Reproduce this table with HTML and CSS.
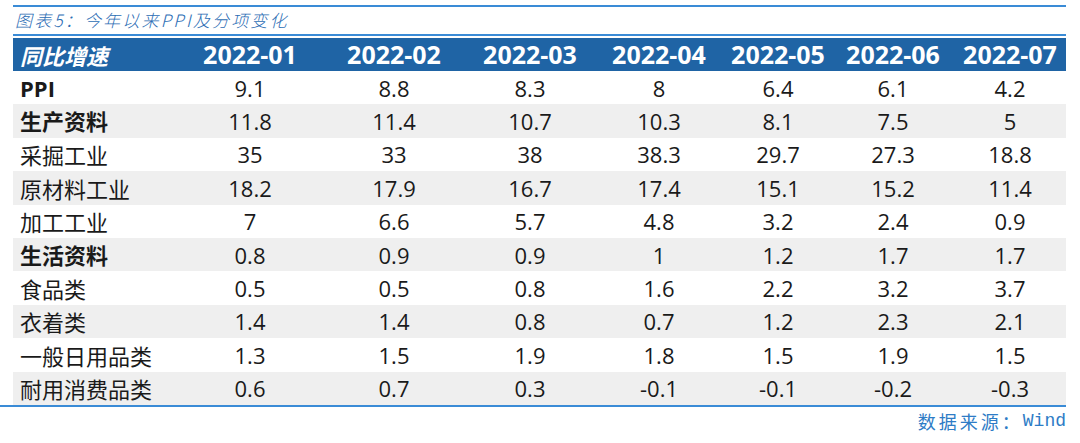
FILE: index.html
```html
<!DOCTYPE html>
<html lang="zh-CN">
<head>
<meta charset="utf-8">
<title>图表5：今年以来PPI及分项变化</title>
<link rel="stylesheet" href="styles.css">
</head>
<body>
<div class="figure">
  <div class="rule-top"></div>
  <div class="title">图表5：今年以来PPI及分项变化</div>
  <div class="rule-title"></div>
  <div class="table">
    <div class="head label">同比增速</div>
    <div class="head">2022-01</div>
    <div class="head">2022-02</div>
    <div class="head">2022-03</div>
    <div class="head">2022-04</div>
    <div class="head">2022-05</div>
    <div class="head">2022-06</div>
    <div class="head">2022-07</div>

    <div class="cell label bold">PPI</div>
    <div class="cell">9.1</div><div class="cell">8.8</div><div class="cell">8.3</div><div class="cell">8</div><div class="cell">6.4</div><div class="cell">6.1</div><div class="cell">4.2</div>

    <div class="cell alt label bold">生产资料</div>
    <div class="cell alt">11.8</div><div class="cell alt">11.4</div><div class="cell alt">10.7</div><div class="cell alt">10.3</div><div class="cell alt">8.1</div><div class="cell alt">7.5</div><div class="cell alt">5</div>

    <div class="cell label">采掘工业</div>
    <div class="cell">35</div><div class="cell">33</div><div class="cell">38</div><div class="cell">38.3</div><div class="cell">29.7</div><div class="cell">27.3</div><div class="cell">18.8</div>

    <div class="cell alt label">原材料工业</div>
    <div class="cell alt">18.2</div><div class="cell alt">17.9</div><div class="cell alt">16.7</div><div class="cell alt">17.4</div><div class="cell alt">15.1</div><div class="cell alt">15.2</div><div class="cell alt">11.4</div>

    <div class="cell label">加工工业</div>
    <div class="cell">7</div><div class="cell">6.6</div><div class="cell">5.7</div><div class="cell">4.8</div><div class="cell">3.2</div><div class="cell">2.4</div><div class="cell">0.9</div>

    <div class="cell alt label bold">生活资料</div>
    <div class="cell alt">0.8</div><div class="cell alt">0.9</div><div class="cell alt">0.9</div><div class="cell alt">1</div><div class="cell alt">1.2</div><div class="cell alt">1.7</div><div class="cell alt">1.7</div>

    <div class="cell label">食品类</div>
    <div class="cell">0.5</div><div class="cell">0.5</div><div class="cell">0.8</div><div class="cell">1.6</div><div class="cell">2.2</div><div class="cell">3.2</div><div class="cell">3.7</div>

    <div class="cell alt label">衣着类</div>
    <div class="cell alt">1.4</div><div class="cell alt">1.4</div><div class="cell alt">0.8</div><div class="cell alt">0.7</div><div class="cell alt">1.2</div><div class="cell alt">2.3</div><div class="cell alt">2.1</div>

    <div class="cell label">一般日用品类</div>
    <div class="cell">1.3</div><div class="cell">1.5</div><div class="cell">1.9</div><div class="cell">1.8</div><div class="cell">1.5</div><div class="cell">1.9</div><div class="cell">1.5</div>

    <div class="cell alt label">耐用消费品类</div>
    <div class="cell alt">0.6</div><div class="cell alt">0.7</div><div class="cell alt">0.3</div><div class="cell alt">-0.1</div><div class="cell alt">-0.1</div><div class="cell alt">-0.2</div><div class="cell alt">-0.3</div>
  </div>
</div>
<div class="rule-bottom"></div>
<div class="source"><span class="src-cjk">数据来源：</span><span class="src-latin">Wind</span></div>
</body>
</html>
```

FILE: styles.css
```css
html, body {
  margin: 0;
  padding: 0;
  background: #ffffff;
}

body {
  width: 1080px;
  height: 443px;
  overflow: hidden;
  font-family: "Open Sans", "Noto Sans CJK SC", sans-serif;
  color: #1a1a1a;
}

.figure {
  margin-left: 13px;
  width: 1053px;
  padding-top: 5px;
}

.rule-top {
  height: 2px;
  background: #3a8bd6;
}

.title {
  height: 27px;
  padding-left: 2px;
  font-family: "Noto Sans CJK SC", sans-serif;
  font-style: italic;
  font-weight: 300;
  font-size: 17px;
  line-height: 26px;
  letter-spacing: 2.2px;
  color: #2c6db4;
}

.rule-title {
  height: 2px;
  background: #3a8bd6;
}

.table {
  margin-top: 2px;
  display: grid;
  grid-template-columns: 165px 144px 144px 128px 130px 108px 122px 112px;
  grid-template-rows: 33px repeat(10, 33.4px);
}

.head {
  background: #1f64a5;
  color: #ffffff;
  font-weight: 700;
  font-size: 25px;
  display: flex;
  align-items: center;
  justify-content: center;
  line-height: 1;
}

.head.label {
  justify-content: flex-start;
  padding-left: 7px;
  font-family: "Noto Sans CJK SC", sans-serif;
  font-style: italic;
  font-size: 22px;
}

.cell {
  display: flex;
  align-items: center;
  justify-content: center;
  font-size: 22px;
  line-height: 1;
  background: #ffffff;
}

.cell.alt {
  background: #efefef;
}

.cell.label {
  justify-content: flex-start;
  padding-left: 7px;
  font-family: "Noto Sans CJK SC", sans-serif;
}

.cell.label.bold {
  font-family: "Open Sans", "Noto Sans CJK SC", sans-serif;
  font-weight: 700;
}

.rule-bottom {
  width: 1066px;
  height: 2px;
  background: #3a8bd6;
}

.source {
  width: 1066px;
  display: flex;
  justify-content: flex-end;
  align-items: center;
  height: 28px;
  color: #2e7cc6;
  font-size: 18px;
}

.src-cjk {
  font-family: "Noto Sans CJK SC", sans-serif;
  letter-spacing: 3px;
}

.src-latin {
  font-family: "Liberation Mono", monospace;
}
```
